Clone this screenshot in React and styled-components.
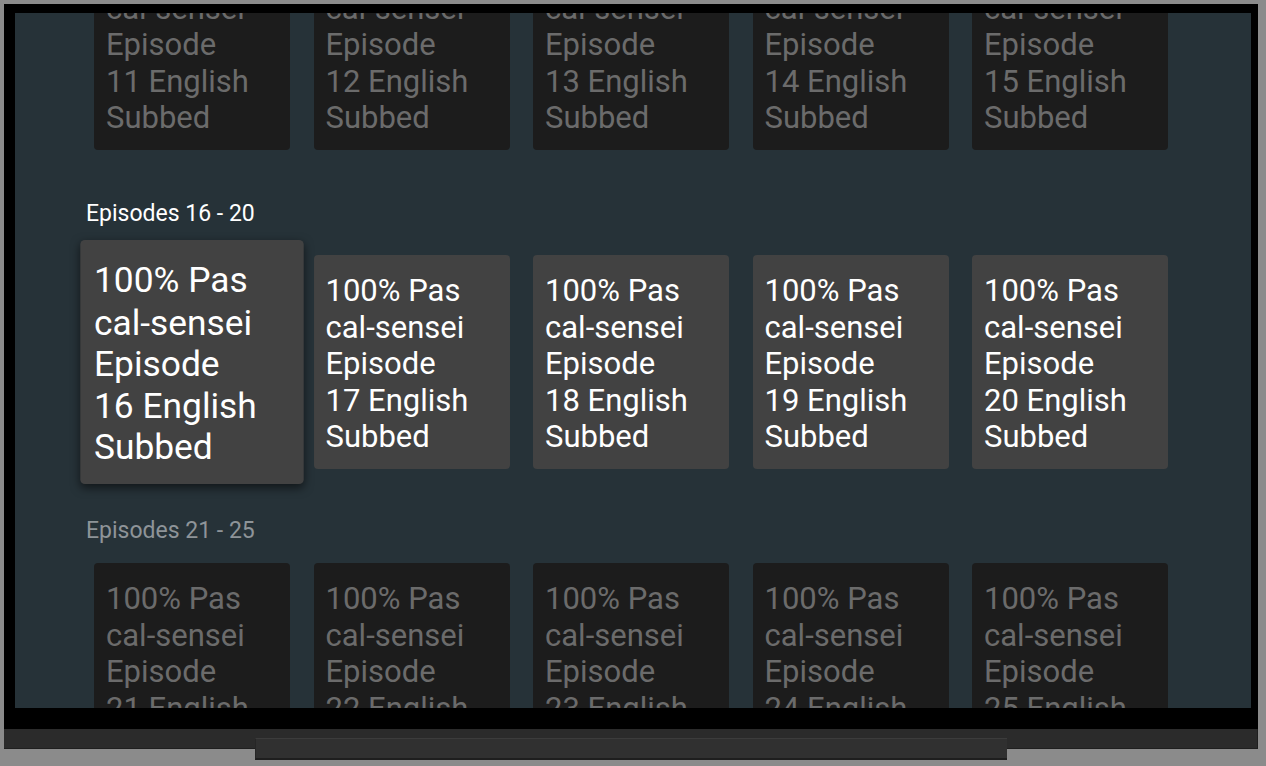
import React from "react";
import styled, { createGlobalStyle } from "styled-components";

const Global = createGlobalStyle`
  html, body { margin: 0; padding: 0; background: #8b8b8b; }
  body { font-family: Roboto, "Noto Sans", "Liberation Sans", sans-serif; }
  * { box-sizing: border-box; }
`;

const Page = styled.div`
  width: 1266px;
  height: 766px;
  padding: 4px 8px 0 4px;
  overflow: hidden;
  background: #8b8b8b;
`;

const Tv = styled.div`
  width: 1254px;
  display: flex;
  flex-direction: column;
`;

const Bezel = styled.div`
  height: 725px;
  background: #000;
  padding: 9px 7px 21px 11px;
`;

const Screen = styled.div`
  width: 1236px;
  height: 695px;
  background: #263238;
  overflow: hidden;
`;

const Content = styled.div`
  margin-top: -171px;
  display: flex;
  flex-direction: column;
`;

const Band = styled.div`
  height: 20px;
  background: #2b2b2b;
  border-bottom: 1px solid #1f1f1f;
  border-right: 1px solid #1f1f1f;
`;

const Stand = styled.div`
  width: 752px;
  height: 22px;
  margin: -11px 0 0 251px;
  background: #303030;
  border-top: 1px solid #3c3c3c;
  border-bottom: 2px solid #1e1e1e;
  border-left: 1px solid #262626;
`;

const Row = styled.section`
  display: flex;
  flex-direction: column;
`;

const Header = styled.h2`
  margin: ${(p) => (p.$focused ? "50px 0 27px" : "48px 0 18px")};
  padding-left: 71px;
  font-family: Roboto, "Liberation Sans", sans-serif;
  font-weight: 400;
  font-size: 23px;
  line-height: 28px;
  height: 28px;
  color: ${(p) => (p.$focused ? "#ffffff" : "#8e9498")};
`;

const Cards = styled.div`
  display: flex;
  gap: 23.5px;
  padding-left: 79px;
`;

const Card = styled.div`
  position: relative;
  flex: 0 0 196px;
  width: 196px;
  height: 214px;
  padding: 18px 12px 14px;
  border-radius: 4px;
  background: ${(p) => (p.$dim ? "#1c1c1c" : "#424242")};
  color: ${(p) => (p.$dim ? "#6b6b6b" : "#ffffff")};
  font-family: Roboto, "Liberation Sans", sans-serif;
  font-size: 31px;
  line-height: 36.5px;
  white-space: pre-line;
  overflow: hidden;
  ${(p) =>
    p.$selected &&
    `
    z-index: 2;
    transform: scale(1.14);
    box-shadow: 0 3px 8px rgba(0, 0, 0, 0.55);
  `}
`;

const rows = [
  { label: "Episodes 11 - 15", start: 11, focused: false },
  { label: "Episodes 16 - 20", start: 16, focused: true, selected: 0 },
  { label: "Episodes 21 - 25", start: 21, focused: false },
];

const title = (n) => `100% Pas\ncal-sensei\nEpisode\n${n} English\nSubbed`;

export default function App() {
  return (
    <>
      <Global />
      <Page>
        <Tv>
          <Bezel>
            <Screen>
              <Content>
                {rows.map((r) => (
                  <Row key={r.label}>
                    <Header $focused={r.focused}>{r.label}</Header>
                    <Cards>
                      {[0, 1, 2, 3, 4].map((i) => (
                        <Card
                          key={i}
                          $dim={!r.focused}
                          $selected={r.focused && r.selected === i}
                        >
                          {title(r.start + i)}
                        </Card>
                      ))}
                    </Cards>
                  </Row>
                ))}
              </Content>
            </Screen>
          </Bezel>
          <Band />
          <Stand />
        </Tv>
      </Page>
    </>
  );
}
